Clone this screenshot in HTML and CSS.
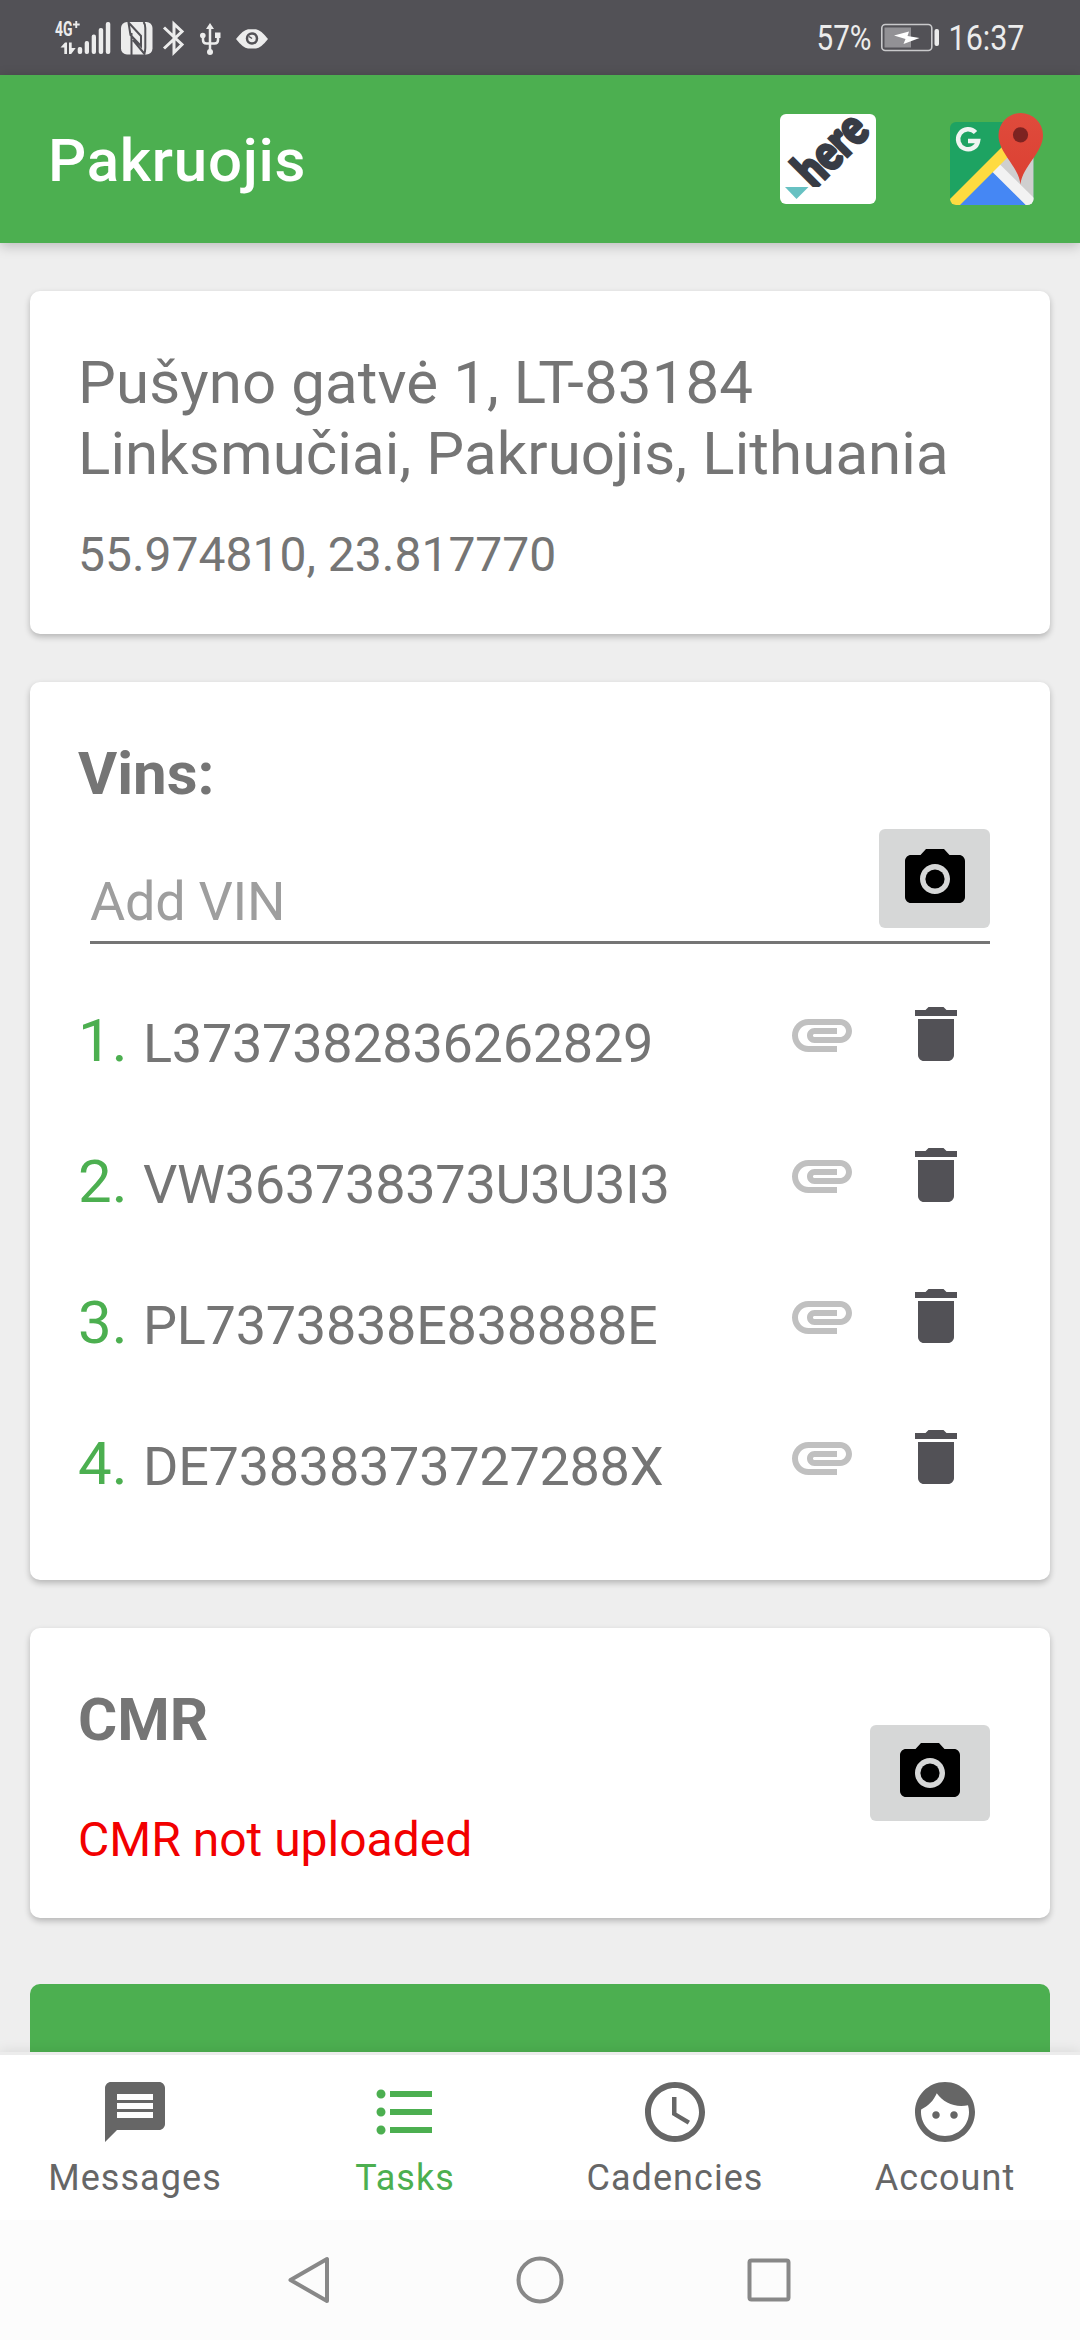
FILE: index.html
```html
<!DOCTYPE html>
<html lang="en">
<head>
<meta charset="utf-8">
<title>Pakruojis</title>
<link rel="stylesheet" href="styles.css">
</head>
<body>
<svg class="defs" aria-hidden="true">
  <symbol id="camera" viewBox="0 0 24 24"><circle cx="12" cy="12" r="3.2"/><path d="M9 2L7.17 4H4c-1.1 0-2 .9-2 2v12c0 1.1.9 2 2 2h16c1.1 0 2-.9 2-2V6c0-1.1-.9-2-2-2h-3.17L15 2H9zm3 15c-2.76 0-5-2.24-5-5s2.24-5 5-5 5 2.24 5 5-2.240 5-5 5z"/></symbol>
  <symbol id="clip" viewBox="0 0 24 24"><path d="M2 12.5C2 9.46 4.46 7 7.5 7H18c2.21 0 4 1.790 4 4s-1.790 4-4 4H9.5C8.12 15 7 13.88 7 12.5S8.12 10 9.5 10H17v2H9.410c-.55 0-.55 1 0 1H18c1.100 0 2-.9 2-2s-.9-2-2-2H7.500C5.570 9 4 10.570 4 12.500S5.570 16 7.500 16H17v2H7.500C4.460 18 2 15.540 2 12.500z"/></symbol>
  <symbol id="trash" viewBox="0 0 24 24"><path d="M6 19c0 1.100.9 2 2 2h8c1.100 0 2-.9 2-2V7H6v12zM19 4h-3.500l-1-1h-5l-1 1H5v2h14V4z"/></symbol>
</svg>
<div class="screen">
  <header class="status">
    <svg class="status-left" width="220" height="40" viewBox="50 18 220 40">
      <g fill="#ececec">
        <text class="net" x="55" y="36" textLength="17.500" lengthAdjust="spacingAndGlyphs">4G</text>
        <path d="M73 23.500h2.300v-2.500h1.900v2.500h2.500v1.900h-2.500v2.500h-1.900v-2.500H73z"/>
        <path d="M60.500 47.500l4.500-5h2V54h-2.700v-6.500zM69 42.500h2.700V48h4l-4.500 6H69z"/>
        <rect x="77.700" y="47" width="4.500" height="7" rx="2"/>
        <rect x="84.700" y="41" width="4.300" height="13" rx="2"/>
        <rect x="91.700" y="34.500" width="4.300" height="19.500" rx="2"/>
        <rect x="98.700" y="28" width="4.500" height="26" rx="2"/>
        <rect x="105.800" y="22" width="4.500" height="32" rx="2"/>
      </g>
      <rect x="121" y="22" width="31.500" height="32.500" rx="6" fill="#ececec"/>
      <path d="M128.500 22.500L141 36v10L130.500 35zM131.500 55V33M133 40l12 14.500M143.500 22q1.800 2 1.800 6v20q0 4-1.300 6" fill="none" stroke="#525156" stroke-width="2"/>
      <path d="M164 27.500l18 17-8 8V24l8 7.500-18 17" fill="none" stroke="#ececec" stroke-width="3"/>
      <g fill="none" stroke="#ececec" stroke-width="2.500"><path d="M210 26v27M203 36v4q0 3.500 3.500 3.500h8q3.500 0 3.500-3.500v-4"/></g>
      <g fill="#ececec"><path d="M206 29l4-6 4 6z"/><circle cx="202.800" cy="35.500" r="2.800"/><rect x="215" y="32.500" width="5.500" height="5.500"/><circle cx="210" cy="52" r="3"/>
      <path d="M236 39q7-9 12-9.800h8q5 .8 12 9.800-7 9-12 9.500h-8q-5-.5-12-9.500z"/></g>
      <circle cx="252" cy="38.500" r="5" fill="none" stroke="#525156" stroke-width="2.500"/><path d="M252 38.500l-3-2" stroke="#525156" stroke-width="1.500"/>
    </svg>
    <svg class="status-right" width="220" height="40" viewBox="810 18 220 40">
      <text class="clock" x="816.500" y="50" textLength="55" lengthAdjust="spacingAndGlyphs">57%</text>
      <rect x="881.800" y="24.500" width="50" height="26" rx="3.500" fill="none" stroke="#c9c9cb" stroke-width="1.600"/>
      <rect x="884.500" y="27.500" width="26.500" height="20" fill="#929195"/>
      <path d="M894 35.500l15-4-1.500 4.500 12 2-16 6 2-5z" fill="#fff"/>
      <rect x="934.500" y="29" width="4.500" height="17" rx="2" fill="#ececec"/>
      <text class="clock" x="948.500" y="50" textLength="76" lengthAdjust="spacingAndGlyphs">16:37</text>
    </svg>
  </header>

  <div class="appbar">
    <h1>Pakruojis</h1>
    <div class="maps">
      <svg width="96" height="90" viewBox="0 0 96 90">
        <rect width="96" height="90" rx="6" fill="#fff"/>
        <text class="here" transform="translate(34 76) rotate(-45)" textLength="81" lengthAdjust="spacingAndGlyphs">here</text>
        <path d="M6 73h60v16H6z" fill="#fff"/>
        <path d="M5 73h23.500L16.500 85z" fill="#67c1c2"/>
      </svg>
      <svg width="96" height="96" viewBox="0 0 96 96">
        <defs>
          <clipPath id="tile"><rect x="2" y="11" width="83.500" height="83" rx="6"/></clipPath>
          <linearGradient id="pin" x2="0" y2="1"><stop offset="0" stop-color="#df4b3c"/><stop offset="1" stop-color="#dc4032"/></linearGradient>
        </defs>
        <g clip-path="url(#tile)">
          <path d="M2 11h84v83H2z" fill="#1ea362"/>
          <path d="M43 60l20-20 24-10v65H77z" fill="#cfcfcf"/>
          <path d="M10 95l34-35.500L79 95z" fill="#4587f4"/>
          <path d="M43.500 60l7.500-7.500L93 94l-7 8z" fill="#f2f2f2"/>
          <path d="M-2 92L60 30l4 12-59 59z" fill="#fedb41"/>
        </g>
        <path d="M27.500 21.500a10 10 0 1 0 2.500 8.500H20" fill="none" stroke="#f0f5f2" stroke-width="4.500"/>
        <path d="M72.500 73.500C70.500 55 50.500 42 50.500 24.300a22.200 22.200 0 0 1 44.500 0C95 42 74.500 55 72.500 73.500z" fill="url(#pin)"/>
        <circle cx="72.500" cy="23.800" r="7.600" fill="#7e2321"/>
      </svg>
    </div>
  </div>

  <main class="content">
    <section class="card address">
      <p class="street">Pušyno gatvė 1, LT-83184<br>Linksmučiai, Pakruojis, Lithuania</p>
      <p class="coords">55.974810, 23.817770</p>
    </section>

    <section class="card vins">
      <h2>Vins:</h2>
      <div class="field">
        <span class="hint">Add VIN</span>
        <button class="shot" aria-label="Scan VIN"><svg class="icon"><use href="#camera"/></svg></button>
      </div>
      <ol class="list">
        <li><span class="num">1.</span><span class="vin">L3737382836262829</span><svg class="icon clip"><use href="#clip"/></svg><svg class="icon trash"><use href="#trash"/></svg></li>
        <li><span class="num">2.</span><span class="vin">VW363738373U3U3I3</span><svg class="icon clip"><use href="#clip"/></svg><svg class="icon trash"><use href="#trash"/></svg></li>
        <li><span class="num">3.</span><span class="vin">PL7373838E838888E</span><svg class="icon clip"><use href="#clip"/></svg><svg class="icon trash"><use href="#trash"/></svg></li>
        <li><span class="num">4.</span><span class="vin">DE73838373727288X</span><svg class="icon clip"><use href="#clip"/></svg><svg class="icon trash"><use href="#trash"/></svg></li>
      </ol>
    </section>

    <section class="card cmr">
      <div>
        <h2>CMR</h2>
        <p class="error">CMR not uploaded</p>
      </div>
      <button class="shot wide" aria-label="Photograph CMR"><svg class="icon"><use href="#camera"/></svg></button>
    </section>

    <div class="submit"></div>
  </main>

  <nav class="tabs">
    <a class="tab"><svg class="icon" viewBox="0 0 24 24"><path d="M20 2H4c-1.100 0-1.990.9-1.990 2L2 22l4-4h14c1.100 0 2-.9 2-2V4c0-1.100-.9-2-2-2zm-2 12H6v-2h12v2zm0-3H6V9h12v2zm0-3H6V6h12v2z"/></svg><span>Messages</span></a>
    <a class="tab active"><svg class="icon" viewBox="0 0 24 24"><path d="M4 10.500c-.83 0-1.500.67-1.500 1.500s.67 1.500 1.500 1.500 1.500-.67 1.500-1.500-.67-1.500-1.500-1.500zm0-6c-.83 0-1.500.67-1.500 1.500S3.170 7.500 4 7.500 5.500 6.830 5.500 6 4.830 4.500 4 4.500zm0 12c-.83 0-1.500.68-1.500 1.500s.68 1.500 1.500 1.500 1.500-.68 1.500-1.500-.67-1.500-1.500-1.500zM7 19h14v-2H7v2zm0-6h14v-2H7v2zm0-8v2h14V5H7z"/></svg><span>Tasks</span></a>
    <a class="tab"><svg class="icon" viewBox="0 0 24 24"><path d="M11.990 2C6.470 2 2 6.480 2 12s4.470 10 9.990 10C17.520 22 22 17.520 22 12S17.520 2 11.990 2zM12 20c-4.420 0-8-3.580-8-8s3.580-8 8-8 8 3.580 8 8-3.580 8-8 8zM12.500 7H11v6l5.250 3.150.75-1.230-4.500-2.670z"/></svg><span>Cadencies</span></a>
    <a class="tab"><svg class="icon" viewBox="0 0 24 24"><path d="M9 11.750c-.69 0-1.250.56-1.250 1.250s.56 1.250 1.250 1.250 1.250-.56 1.250-1.250-.56-1.250-1.250-1.250zm6 0c-.69 0-1.250.56-1.250 1.250s.56 1.250 1.250 1.250 1.250-.56 1.250-1.250-.56-1.250-1.250-1.250zM12 2C6.480 2 2 6.480 2 12s4.480 10 10 10 10-4.480 10-10S17.520 2 12 2zm0 18c-4.410 0-8-3.590-8-8 0-.29.020-.58.050-.86 2.360-1.050 4.230-2.980 5.210-5.370C11.070 8.330 14.050 10 17.420 10c.78 0 1.530-.09 2.250-.26.21.71.33 1.470.33 2.260 0 4.410-3.590 8-8 8z"/></svg><span>Account</span></a>
  </nav>

  <footer class="sysnav">
    <svg viewBox="0 0 48 48"><path d="M40 3v42L3.500 24z"/></svg>
    <svg viewBox="0 0 48 48"><circle cx="24" cy="24" r="21.500"/></svg>
    <svg viewBox="0 0 48 48"><rect x="4.500" y="4.500" width="39" height="39" rx="2"/></svg>
  </footer>
</div>
</body>
</html>
```

FILE: styles.css
```css
* { box-sizing: border-box; margin: 0; padding: 0; }
body { font-family: Roboto, "Liberation Sans", sans-serif; color: #757575; background: #eee; }
svg { display: block; flex: none; overflow: visible; }
.defs { display: none; }
.screen { width: 1080px; height: 2340px; display: flex; flex-direction: column; overflow: hidden; }

.status { height: 75px; background: #525156; display: flex; justify-content: space-between; padding: 18px 50px 0; flex: none; }
.net { font-size: 20px; font-weight: 700; }
.clock { font-size: 35.5px; fill: #ececec; }

.appbar { height: 168px; flex: none; background: #4caf50; display: flex; justify-content: space-between; padding: 0 36px 0 48px; box-shadow: 0 3px 12px rgba(0,0,0,.22); position: relative; }
h1 { font-size: 60px; line-height: 70px; font-weight: 500; letter-spacing: .75px; color: #fff; padding-top: 51px; }
.maps { display: flex; gap: 72px; padding-top: 38px; }
.maps svg:first-child { margin-top: 1px; }
.maps svg:last-child { margin-top: -2px; }
.here { font: 900 50px Lato, sans-serif; fill: #383c45; stroke: #383c45; stroke-width: 3; }

.content { flex: 1; min-height: 0; overflow: hidden; padding: 48px 30px 0; }
.card { background: #fff; border-radius: 10px; box-shadow: 0 3px 6px rgba(0,0,0,.24); padding-left: 48px; }
.address { height: 343px; padding-top: 56px; }
.street { font-size: 60px; line-height: 71px; letter-spacing: .1px; }
.coords { font-size: 48px; line-height: 56px; margin-top: 38px; }
.vins { height: 898px; margin-top: 48px; padding: 57px 60px 0 48px; }
h2 { font-size: 60px; line-height: 70px; font-weight: 700; }
.field { margin: 20px 0 0 12px; height: 115px; border-bottom: 3px solid #757575; display: flex; justify-content: space-between; }
.hint { font-size: 54px; line-height: 64px; letter-spacing: -.27px; color: #9e9e9e; padding-top: 41px; }
.shot { display: flex; align-items: flex-start; border: 0; background: #d6d7d7; border-radius: 6px; width: 111px; height: 99px; padding: 14px 0 0 20px; }
.shot.wide { width: 120px; height: 96px; padding: 12px 0 0 24px; margin-top: 97px; }
.icon { width: 72px; height: 72px; fill: currentColor; }
.shot .icon { color: #000; }
.list { list-style: none; margin-top: 54px; }
.list li { height: 141px; display: flex; }
.num { font-size: 60px; line-height: 70px; color: #4caf50; width: 65px; padding-top: 8px; }
.vin { font-size: 54px; line-height: 64px; letter-spacing: -.27px; padding-top: 14px; flex: 1; }
.clip { color: #c0c0c0; margin-right: 42px; }
.trash { color: #525156; margin-right: 18px; }
.cmr { height: 290px; margin-top: 48px; display: flex; justify-content: space-between; padding: 0 60px 0 48px; }
.cmr h2 { margin-top: 57px; }
.error { font-size: 48px; line-height: 56px; color: #f20000; margin-top: 57px; }
.submit { height: 144px; margin-top: 66px; background: #4caf50; border-radius: 10px; }

.tabs { flex: none; height: 168px; border-top: 3px solid #ececec; background: #fff; display: grid; grid-template-columns: repeat(4, 1fr); position: relative; box-shadow: 0 -2px 12px rgba(0,0,0,.08); }
.tab { display: flex; flex-direction: column; align-items: center; padding-top: 21px; color: #666; }
.tab span { font-size: 36px; line-height: 42px; letter-spacing: 1.05px; margin-top: 9px; }
.tab.active { color: #4caf50; }
.sysnav { flex: none; height: 120px; background: #fcfcfc; display: flex; justify-content: center; align-items: center; gap: 181px; position: relative; }
.sysnav svg { width: 48px; height: 48px; fill: none; stroke: #888; stroke-width: 4; stroke-linejoin: round; }
```
